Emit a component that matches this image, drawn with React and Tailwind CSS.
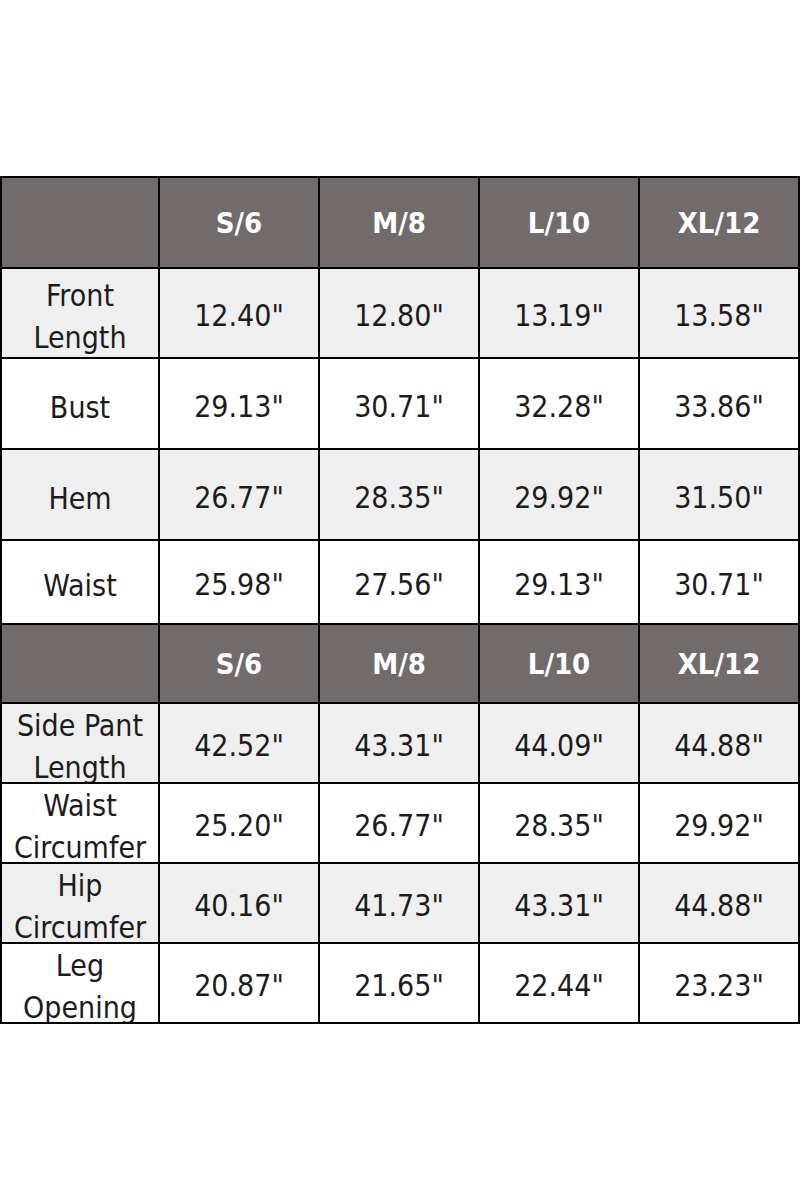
const sizes = ['S/6', 'M/8', 'L/10', 'XL/12']

const top = [
  { label: ['Front', 'Length'], values: ['12.40"', '12.80"', '13.19"', '13.58"'], h: 'h-[90px]', shade: true },
  { label: ['Bust'], values: ['29.13"', '30.71"', '32.28"', '33.86"'], h: 'h-[91px]' },
  { label: ['Hem'], values: ['26.77"', '28.35"', '29.92"', '31.50"'], h: 'h-[91px]', shade: true },
  { label: ['Waist'], values: ['25.98"', '27.56"', '29.13"', '30.71"'], h: 'h-[84px]' },
]

const bottom = [
  { label: ['Side Pant', 'Length'], values: ['42.52"', '43.31"', '44.09"', '44.88"'], h: 'h-[80px]', shade: true },
  { label: ['Waist', 'Circumfer'], values: ['25.20"', '26.77"', '28.35"', '29.92"'], h: 'h-[80px]' },
  { label: ['Hip', 'Circumfer'], values: ['40.16"', '41.73"', '43.31"', '44.88"'], h: 'h-[80px]', shade: true },
  { label: ['Leg', 'Opening'], values: ['20.87"', '21.65"', '22.44"', '23.23"'], h: 'h-[80px]' },
]

const cell = 'flex flex-col items-center justify-center overflow-hidden border-r-2 border-b-2 border-black text-center whitespace-nowrap'

function HeaderRow({ h }) {
  return (
    <>
      <div className={`${cell} ${h} bg-[#716c6b]`} />
      {sizes.map(s => (
        <div key={s} className={`${cell} ${h} bg-[#716c6b] text-white font-semibold text-[29px]`}>{s}</div>
      ))}
    </>
  )
}

function DataRow({ row }) {
  const bg = row.shade ? 'bg-[#efefef]' : 'bg-white'
  return (
    <>
      <div className={`${cell} ${row.h} ${bg} pt-[8px]`}>
        {row.label.map(l => <span key={l}>{l}</span>)}
      </div>
      {row.values.map((v, i) => (
        <div key={i} className={`${cell} ${row.h} ${bg} pt-[6px]`}>{v}</div>
      ))}
    </>
  )
}

export default function App() {
  return (
    <div className="w-[800px] h-[1200px] bg-white pt-[176px]"
      style={{ fontFamily: '"DejaVu Sans Condensed", Roboto, sans-serif' }}>
      <div className="grid grid-cols-[158px_160px_160px_160px_160px] border-l-2 border-t-2 border-black text-[30px] leading-[42px] text-[#1c1c1c]">
        <HeaderRow h="h-[91px]" />
        {top.map((r, i) => <DataRow key={i} row={r} />)}
        <HeaderRow h="h-[79px]" />
        {bottom.map((r, i) => <DataRow key={i} row={r} />)}
      </div>
    </div>
  )
}
